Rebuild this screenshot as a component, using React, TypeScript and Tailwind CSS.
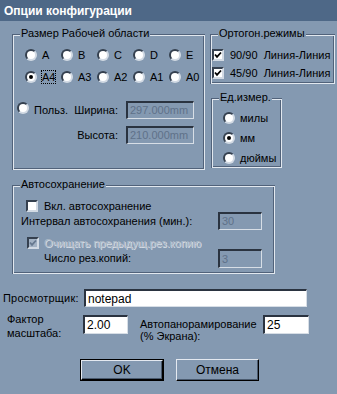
import React from "react";

function GroupBox({ legend, className, children }: { legend: string; className: string; children?: React.ReactNode }) {
  return (
    <div className={`relative shrink-0 shadow-[inset_1px_1px_0_#51627a,inset_-1px_-1px_0_#e2e8ef,inset_2px_2px_0_#e2e8ef,inset_-2px_-2px_0_#51627a] ${className}`}>
      <span className="absolute left-[8px] top-[-7px] px-[1px] bg-[#8499b1] leading-[13px] whitespace-nowrap">{legend}</span>
      {children}
    </div>
  );
}

function Radio({ checked }: { checked?: boolean }) {
  return (
    <span className="relative inline-block w-[12px] h-[12px] shrink-0 rounded-full bg-white border-2 border-t-[#35404f] border-l-[#35404f] border-r-[#d2dae4] border-b-[#d2dae4]">
      {checked && <span className="absolute left-[2px] top-[2px] w-[4px] h-[4px] rounded-full bg-black" />}
    </span>
  );
}

function Check({ checked, disabled }: { checked?: boolean; disabled?: boolean }) {
  return (
    <span
      className={`inline-flex items-center justify-center w-[12px] h-[12px] shrink-0 border-2 border-t-[#35404f] border-l-[#35404f] border-r-[#d2dae4] border-b-[#d2dae4] ${
        disabled ? "bg-[#a3b2c4]" : "bg-white"
      }`}
    >
      {checked && (
        <svg viewBox="0 0 8 8" width="8" height="8">
          <path d="M1 3.5 L3 5.8 L7 1.5" stroke={disabled ? "#66788f" : "#000"} strokeWidth="1.8" fill="none" />
        </svg>
      )}
    </span>
  );
}

function Field({ value, disabled, className }: { value: string; disabled?: boolean; className: string }) {
  return (
    <div
      className={`flex items-center shrink-0 pl-[2px] border-t-2 border-l-2 border-r border-b border-t-[#2a3340] border-l-[#2a3340] border-r-[#d7dee6] border-b-[#d7dee6] ${
        disabled ? "text-[#5f7189]" : "bg-white text-black"
      } ${className}`}
    >
      {value}
    </div>
  );
}

function RadioItem({ label, checked, focus }: { label: string; checked?: boolean; focus?: boolean }) {
  return (
    <div className="flex items-center gap-[5px] w-[36px] h-[12px]">
      <Radio checked={checked} />
      <span className={focus ? "outline outline-1 outline-dotted outline-black leading-[12px]" : "leading-[12px]"}>{label}</span>
    </div>
  );
}

export default function App() {
  return (
    <div className="w-[337px] h-[394px] bg-[#8499b1] overflow-hidden text-[11px] text-black font-['Liberation_Sans',Arial,sans-serif]">
      <div className="h-[21px] bg-[#4e6887] flex items-center pl-[4px] text-white font-bold text-[12px]">Опции конфигурации</div>

      <div className="flex items-start pl-[12px] pt-[13px]">
        <GroupBox legend="Размер Рабочей области" className="w-[193px] h-[136px]">
          <div className="flex pt-[15px] pl-[13px]">
            <RadioItem label="A" />
            <RadioItem label="B" />
            <RadioItem label="C" />
            <RadioItem label="D" />
            <RadioItem label="E" />
          </div>
          <div className="flex pl-[13px] mt-[10px]">
            <RadioItem label="A4" checked focus />
            <RadioItem label="A3" />
            <RadioItem label="A2" />
            <RadioItem label="A1" />
            <RadioItem label="A0" />
          </div>
          <div className="flex items-center mt-[18px] h-[18px]">
            <span className="ml-[5px]">
              <Radio />
            </span>
            <span className="ml-[5px] w-[40px]">Польз.</span>
            <span className="w-[44px] text-right">Ширина:</span>
            <Field value="297.000mm" disabled className="ml-[8px] w-[68px] h-[18px]" />
          </div>
          <div className="flex items-center mt-[7px] h-[18px]">
            <span className="w-[106px] text-right">Высота:</span>
            <Field value="210.000mm" disabled className="ml-[8px] w-[68px] h-[18px]" />
          </div>
        </GroupBox>

        <div className="ml-[5px] flex flex-col">
          <GroupBox legend="Ортогон.режимы" className="w-[125px] h-[50px]">
            <div className="pt-[15px] pl-[2px] flex flex-col gap-[6px]">
              <div className="flex items-center gap-[6px] h-[12px] whitespace-pre">
                <Check checked />
                <span>90/90  Линия-Линия</span>
              </div>
              <div className="flex items-center gap-[6px] h-[12px] whitespace-pre">
                <Check checked />
                <span>45/90  Линия-Линия</span>
              </div>
            </div>
          </GroupBox>
          <GroupBox legend="Ед.измер." className="ml-[1px] mt-[14px] w-[71px] h-[70px]">
            <div className="pt-[14px] pl-[12px] flex flex-col gap-[8px]">
              <div className="flex items-center gap-[5px] h-[12px]">
                <Radio />
                <span>милы</span>
              </div>
              <div className="flex items-center gap-[5px] h-[12px]">
                <Radio checked />
                <span>мм</span>
              </div>
              <div className="flex items-center gap-[5px] h-[12px]">
                <Radio />
                <span>дюймы</span>
              </div>
            </div>
          </GroupBox>
        </div>
      </div>

      <div className="pl-[12px] mt-[15px]">
        <GroupBox legend="Автосохранение" className="w-[263px] h-[89px]">
          <div className="flex items-center pt-[15px] pl-[14px] gap-[6px] h-[27px]">
            <Check />
            <span>Вкл. автосохранение</span>
          </div>
          <div className="flex items-center h-[18px]">
            <span className="pl-[9px] w-[206px]">Интервал автосохранения (мин.):</span>
            <Field value="30" disabled className="w-[44px] h-[18px]" />
          </div>
          <div className="flex items-center mt-[7px] pl-[15px] gap-[5px] h-[12px]">
            <Check checked disabled />
            <span className="text-[#aeb9c7] [text-shadow:1px_1px_0_#d7dee6]">Очищать предыдущ.рез.копию</span>
          </div>
          <div className="flex items-center h-[19px]">
            <span className="pl-[32px] w-[206px]">Число рез.копий:</span>
            <Field value="3" disabled className="w-[44px] h-[19px]" />
          </div>
        </GroupBox>
      </div>

      <div className="flex items-center mt-[15px] h-[18px]">
        <span className="pl-[3px] w-[84px] tracking-[0.2px]">Просмотрщик:</span>
        <Field value="notepad" className="w-[223px] h-[18px] text-[12px]" />
      </div>

      <div className="flex items-start mt-[5px]">
        <div className="pl-[7px] w-[83px] leading-[14px]">
          <div>Фактор</div>
          <div>масштаба:</div>
        </div>
        <Field value="2.00" className="mt-[3px] w-[45px] h-[19px] text-[12px]" />
        <div className="ml-[12px] mt-[6px] w-[123px] leading-[12px]">
          <div>Автопанорамирование</div>
          <div>(% Экрана):</div>
        </div>
        <Field value="25" className="mt-[3px] w-[46px] h-[19px] text-[12px]" />
      </div>

      <div className="flex pl-[80px] mt-[17px] gap-[12px]">
        <div className="w-[84px] h-[22px] border border-black">
          <div className="w-full h-full flex items-center justify-center border-t border-l border-t-[#e4e9f0] border-l-[#e4e9f0] border-b border-r border-b-black border-r-black shadow-[inset_-1px_-1px_0_#4a5a6e] text-[12px]">
            OK
          </div>
        </div>
        <div className="w-[83px] h-[22px] flex items-center justify-center border-t border-l border-t-[#e4e9f0] border-l-[#e4e9f0] border-b border-r border-b-black border-r-black shadow-[inset_-1px_-1px_0_#4a5a6e] text-[12px]">
          Отмена
        </div>
      </div>
    </div>
  );
}
